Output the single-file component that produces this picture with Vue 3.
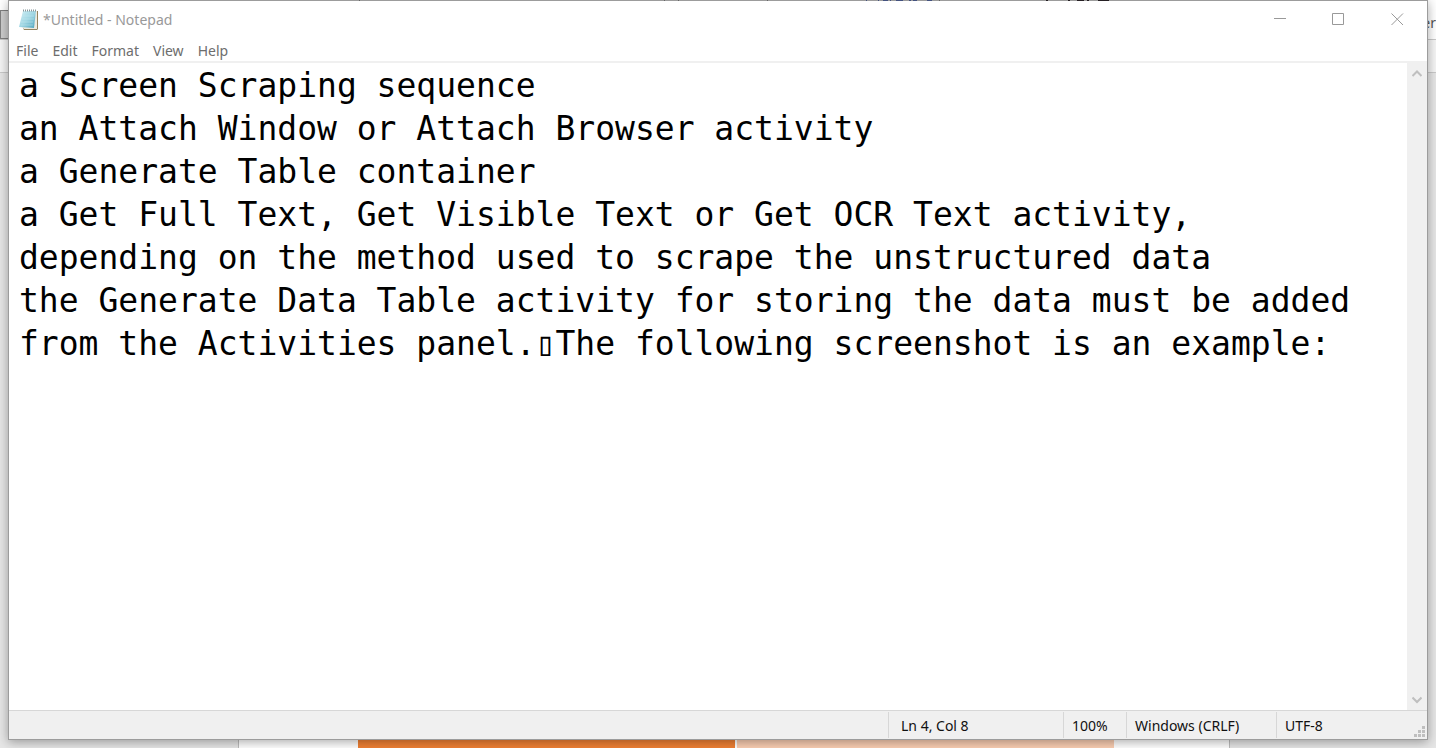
<script setup>
import { ref } from 'vue'

const menus = ['File', 'Edit', 'Format', 'View', 'Help']
const text = ref(
  [
    'a Screen Scraping sequence',
    'an Attach Window or Attach Browser activity',
    'a Generate Table container',
    'a Get Full Text, Get Visible Text or Get OCR Text activity,',
    'depending on the method used to scrape the unstructured data',
    'the Generate Data Table activity for storing the data must be added',
    'from the Activities panel.\u25AFThe following screenshot is an example:',
  ].join('\n'),
)
</script>

<template>
  <div class="desktop">
    <div class="backdrop" aria-hidden="true">
      <div class="band band-top"><i class="tab"></i><span class="peek">er</span></div>
      <div class="band band-tools"></div>
      <div class="band band-body"></div>
      <div class="page">
        <i class="block dark"></i>
        <i class="block light"></i>
      </div>
    </div>

    <main class="window">
      <header class="titlebar">
        <svg class="app-icon" width="20" height="22" viewBox="0 0 20 22">
          <defs>
            <linearGradient id="cover" x1="0" y1="0" x2="1" y2="1">
              <stop offset="0" stop-color="#d3f0f6" />
              <stop offset="0.5" stop-color="#a0d6e3" />
              <stop offset="1" stop-color="#4ba3bd" />
            </linearGradient>
          </defs>
          <path d="M5 2H19V20L18 21H5L4 19Z" fill="#94835f" />
          <path d="M4 2H18V20H5L3 18Z" fill="#eceae0" />
          <path d="M4 2H17L15 19L0 18Z" fill="url(#cover)" />
          <path d="M3 7H15M3 10H15M2 13H14M2 16H14" stroke="#c5e8ef" stroke-width="1" opacity="0.5" />
          <path d="M4 1.500H18" stroke="#87979b" stroke-width="2" stroke-dasharray="1 1" />
        </svg>
        <h1 class="title">*Untitled - Notepad</h1>
        <div class="controls">
          <button type="button" aria-label="Minimize">
            <svg width="13" height="13" viewBox="0 0 13 13"><path d="M1 5.500H13" /></svg>
          </button>
          <button type="button" aria-label="Maximize">
            <svg width="13" height="13" viewBox="0 0 13 13"><path d="M.5 .5H11.500V11.500H.5Z" /></svg>
          </button>
          <button type="button" aria-label="Close">
            <svg width="13" height="13" viewBox="0 0 13 13"><path d="M.5 .5L12 12M12 .5L.5 12" /></svg>
          </button>
        </div>
      </header>

      <nav class="menubar">
        <button v-for="m in menus" :key="m" type="button">{{ m }}</button>
      </nav>

      <section class="editor">
        <textarea v-model="text" aria-label="Document text" spellcheck="false"></textarea>
        <div class="scrollbar">
          <button type="button" aria-label="Scroll up">
            <svg width="10" height="8" viewBox="0 0 10 8"><path d="M.5 6L5 1.500L9.500 6" /></svg>
          </button>
          <button type="button" aria-label="Scroll down">
            <svg width="10" height="8" viewBox="0 0 10 8"><path d="M.5 1.500L5 6L9.500 1.500" /></svg>
          </button>
        </div>
      </section>

      <footer class="status">
        <span class="cell position">Ln 4, Col 8</span>
        <span class="cell zoom">100%</span>
        <span class="cell ending">Windows (CRLF)</span>
        <span class="cell encoding">UTF-8</span>
        <svg class="grip" width="11" height="11" viewBox="0 0 11 11">
          <path d="M8 0h3v3h-3zM4 4h3v3h-3zM8 4h3v3h-3zM0 8h3v3h-3zM4 8h3v3h-3zM8 8h3v3h-3z" />
        </svg>
      </footer>
    </main>

    <svg class="edge-marks" width="1128" height="1" viewBox="0 0 1128 1" aria-hidden="true">
      <path fill="#666" d="M359 0h1v1h-1zM664 0h1v1h-1zM678 0h1v1h-1zM767 0h1v1h-1zM939 0h1v1h-1z" />
      <path fill="#43527f" d="M866 0h1v1h-1zM878 0h1v1h-1zM883 0h5v1h-5zM890 0h1v1h-1zM896 0h7v1h-7zM909 0h2v1h-2zM913 0h4v1h-4zM927 0h5v1h-5z" />
      <path fill="#262024" d="M1046 0h2v1h-2zM1068 0h2v1h-2zM1077 0h7v1h-7zM1087 0h2v1h-2zM1098 0h11v1h-11z" />
    </svg>
  </div>
</template>

<style>
html,
body {
  margin: 0;
  overflow: hidden;
}
</style>

<style scoped>
* {
  box-sizing: border-box;
}
.desktop {
  position: relative;
  display: flex;
  height: 100vh;
  padding: 0 8px 8px;
  overflow: hidden;
  font-family: 'Noto Sans', 'Open Sans', sans-serif;
  font-size: 14px;
}
.backdrop {
  position: absolute;
  inset: 0;
  display: flex;
  flex-direction: column;
  background: #e6e6e6;
}
.edge-marks {
  position: absolute;
  top: 0;
  left: 0;
}
.band {
  flex: none;
  border-bottom: 1px solid #c9c9c9;
}
.band-top {
  display: flex;
  align-items: center;
  justify-content: space-between;
  height: 40px;
  background: #fff;
}
.tab {
  width: 20px;
  height: 29px;
  margin-top: 9px;
  border: 1px solid #808080;
  background: #cdcdcd;
}
.peek {
  padding-top: 6px;
  color: #555;
}
.band-tools {
  height: 33px;
  background: #f5f5f5;
}
.band-body {
  flex: 1;
  border: 0;
}
.page {
  display: flex;
  flex: none;
  gap: 2px;
  height: 20px;
  margin: 0 206px 0 238px;
  padding: 0 115px 0 119px;
  border: solid #bcbcbc;
  border-width: 0 1px;
  background: #fff;
}
.block.dark {
  flex: 1;
  background: #f08034;
}
.block.light {
  flex: 1;
  background: #fbceb2;
}
.window {
  position: relative;
  display: flex;
  flex: 1;
  flex-direction: column;
  min-width: 0;
  border: 1px solid #9c9c9c;
  background: #fff;
  box-shadow: 0 2px 10px rgba(0, 0, 0, 0.34);
}
button {
  display: flex;
  align-items: center;
  justify-content: center;
  margin: 0;
  padding: 0;
  border: 0;
  background: none;
  color: inherit;
  font: inherit;
}
svg {
  display: block;
}
.titlebar {
  display: flex;
  flex: none;
  align-items: center;
  height: 37px;
  padding-left: 10px;
  color: #999;
}
.title {
  flex: 1;
  margin: 0 0 0 4px;
  font-size: 14px;
  font-weight: 400;
}
.controls {
  display: flex;
}
.controls button {
  width: 59px;
  height: 36px;
}
.controls path {
  fill: none;
  stroke: #999;
}
.menubar {
  display: flex;
  flex: none;
  gap: 14px;
  height: 25px;
  padding: 1px 7px 0;
  border-bottom: 2px solid #f0f0f0;
  color: #6d6d6d;
}
.editor {
  display: flex;
  flex: 1;
  min-height: 0;
}
textarea {
  flex: 1;
  min-width: 0;
  margin: 0;
  padding: 1px 0 0 10px;
  border: 0;
  outline: 0;
  overflow: hidden;
  resize: none;
  background: #fff;
  color: #000;
  font-family: 'DejaVu Sans Mono', monospace;
  font-size: 33px;
  line-height: 43px;
}
.scrollbar {
  display: flex;
  flex-direction: column;
  justify-content: space-between;
  width: 20px;
  background: #f0f0f0;
}
.scrollbar button {
  height: 21px;
}
.scrollbar path {
  fill: none;
  stroke: #bfbfbf;
  stroke-width: 2;
}
.status {
  position: relative;
  display: flex;
  flex: none;
  justify-content: flex-end;
  height: 29px;
  padding-top: 1px;
  border-top: 1px solid #d7d7d7;
  background: #f0f0f0;
  color: #111;
}
.cell {
  display: flex;
  align-items: center;
  height: 26px;
  padding-left: 8px;
  border-left: 1px solid #d7d7d7;
}
.position {
  width: 175px;
  padding-left: 12px;
}
.zoom {
  width: 63px;
}
.ending {
  width: 150px;
}
.encoding {
  width: 151px;
}
.grip {
  position: absolute;
  right: 2px;
  bottom: 2px;
  fill: #bfbfbf;
}
</style>
